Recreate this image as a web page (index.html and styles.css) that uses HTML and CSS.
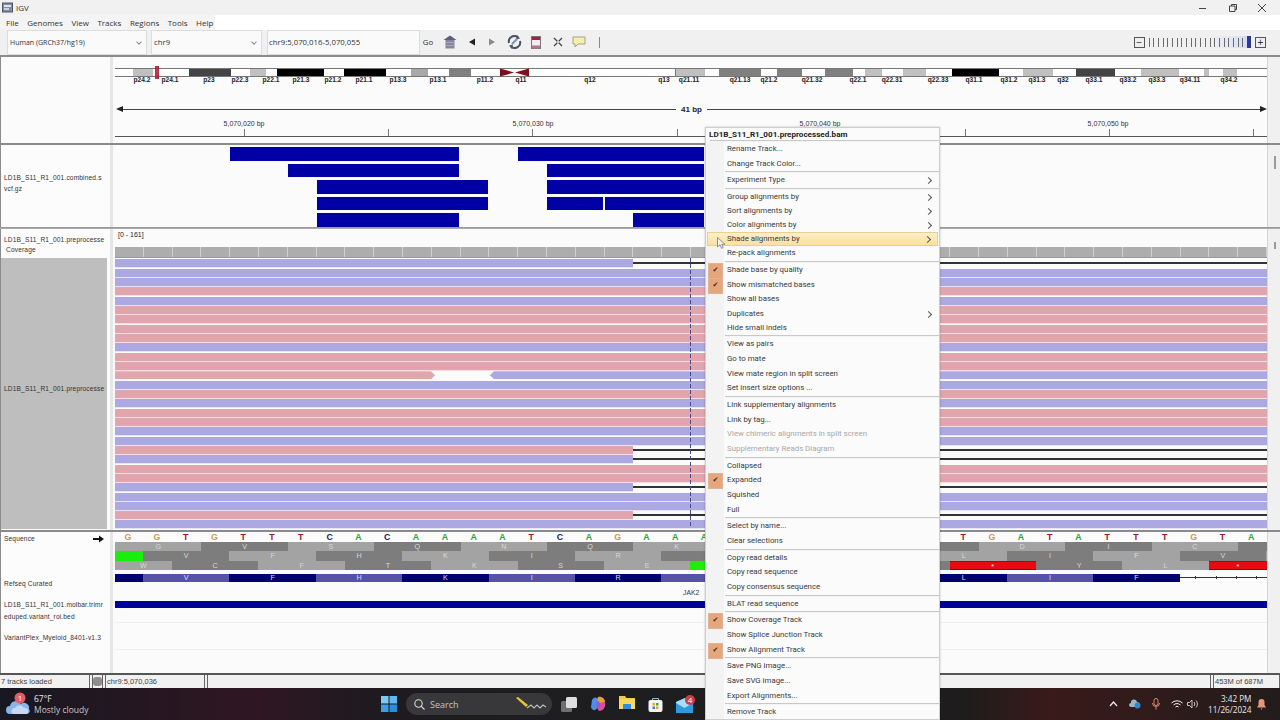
FILE: index.html
```html
<!DOCTYPE html>
<html lang="en">
<head>
<meta charset="utf-8">
<title>IGV</title>
<link rel="stylesheet" href="styles.css">
</head>
<body>
<div class="app">
  <div class="titlebar">
    <svg class="appicon" width="11" height="11" viewBox="0 0 11 11"><rect x="0.5" y="1" width="10" height="9" fill="#7d8fa3" stroke="#556"/><rect x="2" y="3" width="7" height="2" fill="#dfe6ee"/><rect x="2" y="6" width="5" height="2" fill="#c8d2dc"/></svg>
    <span class="apptitle">IGV</span>
    <span class="winctl">
      <svg width="10" height="10" viewBox="0 0 10 10"><path d="M1 5.5H8" stroke="#444" fill="none"/></svg>
      <svg width="10" height="10" viewBox="0 0 10 10"><path d="M1.5 3H7V8.5H1.5ZM3.5 3V1.5H8.5V6.5H7" stroke="#444" fill="none"/></svg>
      <svg width="10" height="10" viewBox="0 0 10 10"><path d="M1 1L9 9M9 1L1 9" stroke="#444" fill="none"/></svg>
    </span>
  </div>
  <div class="menubar">
    <div class="menus"><span>File</span><span>Genomes</span><span>View</span><span>Tracks</span><span>Regions</span><span>Tools</span><span>Help</span></div>
  </div>
  <div class="toolbar">
    <div class="combo c1"><span>Human (GRCh37/hg19)</span><i class="chev"></i></div>
    <div class="combo c2"><span>chr9</span><i class="chev"></i></div>
    <div class="combo c3"><span>chr9:5,070,016-5,070,055</span></div>
    <span class="go">Go</span>
    <div class="tools">
      <svg width="14" height="14" viewBox="0 0 14 14"><path d="M7 0.5L13.5 5H0.5Z" fill="#5e5c80"/><rect x="2.5" y="5" width="9" height="8.5" fill="#85859b"/><rect x="2.5" y="7" width="9" height="1" fill="#a8a8bc"/><rect x="2.5" y="10" width="9" height="1" fill="#a8a8bc"/></svg>
      <svg width="8" height="8" viewBox="0 0 8 8"><path d="M7 0.5V7.5L1 4Z" fill="#222"/></svg>
      <svg class="nx" width="8" height="8" viewBox="0 0 8 8"><path d="M1 0.5V7.5L7 4Z" fill="#8a8a8a"/></svg>
      <svg width="15" height="14" viewBox="0 0 15 14"><path d="M2 8A5.5 5.5 0 0 1 11 2.5M13 6A5.5 5.5 0 0 1 4 11.5" fill="none" stroke="#4a5568" stroke-width="2"/><path d="M10 0L13 3.5L9 4.5ZM5 14L2 10.5L6 9.5Z" fill="#4a5568"/><path d="M5 9L10 4" stroke="#7d93ab" stroke-width="2"/></svg>
      <svg class="rg" width="10" height="13" viewBox="0 0 10 13"><rect x="0.5" y="0.5" width="9" height="12" fill="#f3e9ee" stroke="#777"/><rect x="1" y="1" width="8" height="3" fill="#9b2547"/><rect x="1" y="9.500" width="8" height="3" fill="#b0778c"/></svg>
      <svg class="xx" width="10" height="10" viewBox="0 0 10 10"><path d="M1 1L9 9M9 1L1 9" stroke="#444" stroke-width="1.300" fill="none"/><path d="M4 5H6M5 4V6" stroke="#fff"/></svg>
      <svg class="bb" width="14" height="12" viewBox="0 0 14 12"><path d="M1 1H13V8H6L3 11V8H1Z" fill="#f4efaf" stroke="#a5a283"/></svg>
      <i class="toolbar-bar"></i>
    </div>
    <div class="zoomctl">
      <span class="zbtn">−</span>
      <div class="zticks"><i></i><i></i><i></i><i></i><i></i><i></i><i></i><i></i><i></i><i></i><i></i><i></i><i></i><i></i><i></i><i></i><i></i><i></i><i></i><i></i><i></i><b></b></div>
      <span class="zbtn">+</span>
    </div>
  </div>

  <div class="hpanel">
    <div class="names"></div>
    <div class="gutter"></div>
    <div class="htrack">
      <div class="ideo">
        <i class="w" style="width:17.500px"></i><i class="g3" style="width:20.400px"></i><i class="w" style="width:36px"></i><i class="g1" style="width:42px"></i><i class="w" style="width:19px"></i><i class="g3" style="width:16.500px"></i><i class="w" style="width:11px"></i><i class="g0" style="width:47px"></i><i class="w" style="width:19.200px"></i><i class="g0" style="width:42.800px"></i><i class="w" style="width:24.900px"></i><i class="g2b" style="width:17.200px"></i><i class="w" style="width:20.800px"></i><i class="g2" style="width:21.600px"></i><i class="w" style="width:29.400px"></i>
        <svg class="cen" width="29" height="8" viewBox="0 0 29 8"><path d="M0 0L14 4L0 8ZM29 0L15 4L29 8Z" fill="#7d0f1e"/></svg>
        <i class="w" style="width:123px"></i><i class="w tickband" style="width:23.500px"></i><i class="g3" style="width:29px"></i><i class="w" style="width:14.300px"></i><i class="g2" style="width:42.200px"></i><i class="w" style="width:15.700px"></i><i class="g2" style="width:24.900px"></i><i class="w" style="width:22.900px"></i><i class="g2" style="width:28.500px"></i><i class="w" style="width:11.500px"></i><i class="g3" style="width:17.100px"></i><i class="w" style="width:21.400px"></i><i class="g3" style="width:22.700px"></i><i class="w" style="width:26.100px"></i><i class="g0" style="width:47px"></i><i class="w" style="width:24.100px"></i><i class="g3" style="width:30.100px"></i><i class="w" style="width:22.500px"></i><i class="g1" style="width:39.500px"></i><i class="w" style="width:26.200px"></i><i class="g3" style="width:37.600px"></i><i class="w" style="width:25.200px"></i><i class="g3" style="width:5px"></i><i class="w" style="width:14px"></i><i class="g3" style="width:13.700px"></i><i class="w fill"></i>
        <i class="marker"></i>
      </div>
      <div class="ideolabels">
        <span style="left:27px">p24.2</span><span style="left:55px">p24.1</span><span style="left:94px">p23</span><span style="left:125px">p22.3</span><span style="left:156px">p22.1</span><span style="left:186px">p21.3</span><span style="left:218px">p21.2</span><span style="left:249px">p21.1</span><span style="left:283px">p13.3</span><span style="left:323px">p13.1</span><span style="left:370px">p11.2</span><span style="left:406px">q11</span><span style="left:475px">q12</span><span style="left:549px">q13</span><span style="left:574px">q21.11</span><span style="left:625px">q21.13</span><span style="left:654px">q21.2</span><span style="left:697px">q21.32</span><span style="left:743px">q22.1</span><span style="left:777px">q22.31</span><span style="left:823px">q22.33</span><span style="left:859px">q31.1</span><span style="left:894px">q31.2</span><span style="left:922px">q31.3</span><span style="left:948px">q32</span><span style="left:979px">q33.1</span><span style="left:1013px">q33.2</span><span style="left:1042px">q33.3</span><span style="left:1075px">q34.11</span><span style="left:1114px">q34.2</span>
      </div>
      <div class="span">
        <svg class="ah al" width="7" height="6" viewBox="0 0 7 6"><path d="M0 3L7 0V6Z" fill="#222"/></svg>
        <i class="sline"></i><b>41 bp</b><i class="sline"></i>
        <svg class="ah ar" width="7" height="6" viewBox="0 0 7 6"><path d="M7 3L0 0V6Z" fill="#222"/></svg>
      </div>
      <div class="ruler">
        <span class="rl" style="left:129px">5,070,020 bp</span><span class="rl" style="left:418px">5,070,030 bp</span><span class="rl" style="left:705px">5,070,040 bp</span><span class="rl" style="left:993px">5,070,050 bp</span>
        <div class="ticks"><i></i><i></i><i></i><i></i><i></i><i></i><i></i><i></i></div>
      </div>
    </div>
    <div class="scroll"></div>
  </div>

  <div class="panel p1">
    <div class="names">
      <div class="nm n1">LD1B_S11_R1_001.combined.s</div>
      <div class="nm n1b">vcf.gz</div>
    </div>
    <div class="gutter"></div>
    <div class="track vcfreads">
      <div class="vr r1"><i style="margin-left:115px;width:229px"></i><i style="margin-left:59px;width:186px"></i></div>
      <div class="vr"><i style="margin-left:173px;width:171px"></i><i style="margin-left:88px;width:157px"></i></div>
      <div class="vr"><i style="margin-left:202px;width:171px"></i><i style="margin-left:59px;width:157px"></i></div>
      <div class="vr"><i style="margin-left:202px;width:171px"></i><i style="margin-left:59px;width:56px"></i><i style="margin-left:2px;width:99px"></i></div>
      <div class="vr"><i style="margin-left:202px;width:142px"></i><i style="margin-left:174px;width:71px"></i></div>
    </div>
    <div class="scroll"><i class="thumb t1"></i></div>
  </div>

  <div class="panel p2">
    <div class="names">
      <div class="nm n2">LD1B_S11_R1_001.preprocesse</div>
      <div class="nm n2b">Coverage</div>
      <div class="greybox"><div class="nm">LD1B_S11_R1_001.preprocesse</div></div>
    </div>
    <div class="gutter"></div>
    <div class="track">
      <div class="covlabel">[0 - 161]</div>
      <div class="coverage"></div>
      <div class="reads">
        <div class="row"><i class="b cut"></i><i class="pair"></i></div>
        <div class="row"><i class="b"></i></div>
        <div class="row"><i class="b"></i></div>
        <div class="row"><i class="p"></i></div>
        <div class="row"><i class="b"></i></div>
        <div class="row"><i class="p"></i></div>
        <div class="row"><i class="p"></i></div>
        <div class="row"><i class="p"></i></div>
        <div class="row"><i class="p"></i></div>
        <div class="row"><i class="b"></i></div>
        <div class="row"><i class="p"></i></div>
        <div class="row"><i class="p"></i></div>
        <div class="row"><i class="p endr"></i><i class="b endl"></i></div>
        <div class="row"><i class="b"></i></div>
        <div class="row"><i class="p"></i></div>
        <div class="row"><i class="b"></i></div>
        <div class="row"><i class="p"></i></div>
        <div class="row"><i class="p"></i></div>
        <div class="row"><i class="b"></i></div>
        <div class="row"><i class="b"></i></div>
        <div class="row"><i class="p cut"></i><i class="pair"></i></div>
        <div class="row"><i class="b cut"></i><i class="pair"></i></div>
        <div class="row"><i class="p"></i></div>
        <div class="row"><i class="p"></i></div>
        <div class="row"><i class="b cut"></i><i class="pair"></i></div>
        <div class="row"><i class="b"></i></div>
        <div class="row"><i class="b"></i></div>
        <div class="row"><i class="p cut"></i><i class="pair"></i></div>
        <div class="row"><i class="b"></i></div>
        <i class="center"></i>
      </div>
    </div>
    <div class="scroll"><i class="thumb t2"></i></div>
  </div>

  <div class="panel p3">
    <div class="names">
      <div class="seqname"><span class="nm">Sequence</span><svg width="11" height="8" viewBox="0 0 11 8"><path d="M0 3H6V0.500L11 4L6 7.500V5H0Z" fill="#111"/></svg></div>
      <div class="nm n3">Refseq Curated</div>
      <div class="nm n4">LD1B_S11_R1_001.molbar.trimr</div>
      <div class="nm n5">eduped.variant_roi.bed</div>
      <div class="nm n6">VariantPlex_Myeloid_8401-v1.3</div>
    </div>
    <div class="gutter"></div>
    <div class="track">
      <div class="bases">
        <b class="G">G</b><b class="G">G</b><b class="T">T</b><b class="G">G</b><b class="T">T</b><b class="T">T</b><b class="T">T</b><b class="C">C</b><b class="A">A</b><b class="C">C</b>
        <b class="A">A</b><b class="A">A</b><b class="A">A</b><b class="A">A</b><b class="T">T</b><b class="C">C</b><b class="A">A</b><b class="G">G</b><b class="A">A</b><b class="A">A</b>
        <b class="A">A</b><b></b><b></b><b></b><b></b><b></b><b></b><b></b><b></b><b class="T">T</b>
        <b class="G">G</b><b class="A">A</b><b class="T">T</b><b class="A">A</b><b class="T">T</b><b class="T">T</b><b class="T">T</b><b class="G">G</b><b class="T">T</b><b class="A">A</b>
      </div>
      <div class="frame">
        <i class="l">G</i><i class="d">V</i><i class="l">S</i><i class="d">Q</i><i class="l">N</i><i class="d">Q</i><i class="l">K</i><i class="d"></i><i class="l"></i><i class="d"></i><i class="l">D</i><i class="d">I</i><i class="l">C</i><i class="d grow"></i>
      </div>
      <div class="frame">
        <i class="st s1"></i><i class="d">V</i><i class="l">F</i><i class="d">H</i><i class="l">K</i><i class="d">I</i><i class="l">R</i><i class="d"></i><i class="l"></i><i class="d"></i><i class="l">L</i><i class="d">I</i><i class="l">F</i><i class="d">V</i><i class="l grow"></i>
      </div>
      <div class="frame">
        <i class="l s2">W</i><i class="d">C</i><i class="l">F</i><i class="d">T</i><i class="l">K</i><i class="d">S</i><i class="l">E</i><i class="st"></i><i class="l"></i><i class="d"></i><i class="rd">*</i><i class="d">Y</i><i class="l">L</i><i class="rd grow">*</i>
      </div>
      <div class="refseq">
        <i class="n s1"></i><i class="m">V</i><i class="n">F</i><i class="m">H</i><i class="n">K</i><i class="m">I</i><i class="n">R</i><i class="m"></i><i class="n"></i><i class="m"></i><i class="n">L</i><i class="m">I</i><i class="n">F</i>
        <div class="intron"><i></i><i></i><i></i><i></i></div>
      </div>
      <div class="genelabel"><span>JAK2</span></div>
      <div class="bedbar"></div>
      <div class="sub s23"></div>
      <div class="sub s27"></div>
    </div>
    <div class="scroll"></div>
  </div>

  <div class="status">
    <div class="cell st1">7 tracks loaded</div>
    <div class="cell st2"><i></i></div>
    <div class="cell st3">chr9:5,070,036</div>
    <div class="cell st4"></div>
    <div class="cell st5">453M of 687M</div>
  </div>

  <div class="taskbar">
    <div class="weather">
      <svg width="28" height="26" viewBox="0 0 28 26"><path d="M4 23A4 4 0 0 1 4 15A6 6 0 0 1 15 13A5 5 0 0 1 23 18A3 3 0 0 1 21 23Z" fill="#8ab4e8"/><path d="M8 23A3 3 0 0 1 9 17A5 5 0 0 1 18 17A3 3 0 0 1 20 23Z" fill="#c6d8f2"/><circle cx="14" cy="7" r="5.500" fill="#e8596a"/><text x="14" y="10" text-anchor="middle" class="wbadge">1</text></svg>
      <div class="wtext"><span>67°F</span><span class="wsub">Mostly cloudy</span></div>
    </div>
    <div class="center-icons">
      <svg width="16" height="16" viewBox="0 0 16 16"><rect x="0" y="0" width="7.500" height="7.500" fill="#7ccbf5"/><rect x="8.500" y="0" width="7.500" height="7.500" fill="#5fb8f0"/><rect x="0" y="8.500" width="7.500" height="7.500" fill="#3a9fe6"/><rect x="8.500" y="8.500" width="7.500" height="7.500" fill="#2a8ede"/></svg>
      <div class="search">
        <svg width="11" height="11" viewBox="0 0 11 11"><circle cx="4.500" cy="4.500" r="3.700" fill="none" stroke="#ddd" stroke-width="1.100"/><path d="M7.300 7.300L10.500 10.500" stroke="#ddd" stroke-width="1.100"/></svg>
        <span>Search</span>
        <svg class="pen" width="32" height="14" viewBox="0 0 32 14"><path d="M1 1L11 10L13 8L3 0Z" fill="#e5c441"/><path d="M12 11L16 8L19 11L22 8L25 11L28 8L31 10" fill="none" stroke="#bbb" stroke-width="1.200"/></svg>
      </div>
      <svg class="taskview" width="16" height="15" viewBox="0 0 16 15"><rect x="0" y="4" width="11" height="11" rx="1.500" fill="#6f6f72"/><rect x="5" y="0" width="11" height="11" rx="1.500" fill="#dedede"/></svg>
      <svg width="16" height="16" viewBox="0 0 16 16"><path d="M2 4C4 0 8 1 8 5L7 12C6 15 2 15 1 11Z" fill="#4d8fe8"/><path d="M8 1C12 0 15 3 15 6L10 8L7 4Z" fill="#e5a13a"/><path d="M15 6C16 10 14 15 9 15L7 12L9 7Z" fill="#d94f9e"/><path d="M6 7L9 5L10 10L7 12Z" fill="#8a5cd6"/></svg>
      <div class="tbopen"><svg width="16" height="14" viewBox="0 0 16 14"><path d="M0 1H6L7.500 3H16V14H0Z" fill="#f2c84b"/><rect x="0" y="4" width="16" height="10" fill="#f7d661"/><rect x="4" y="9" width="8" height="5" fill="#2e8fd8"/></svg></div>
      <svg width="15" height="15" viewBox="0 0 15 15"><path d="M4.500 3V1.500H10.500V3" fill="none" stroke="#7cc" stroke-width="1"/><rect x="0.500" y="3" width="14" height="12" rx="2" fill="#f4f4f4"/><rect x="4.500" y="6" width="2.500" height="2.500" fill="#e2a52e"/><rect x="8" y="6" width="2.500" height="2.500" fill="#5a9a3a"/><rect x="4.500" y="9.500" width="2.500" height="2.500" fill="#3a7ec4"/><rect x="8" y="9.500" width="2.500" height="2.500" fill="#e2a52e"/></svg>
      <svg width="20" height="18" viewBox="0 0 20 18"><path d="M0 7L9 3L17 7V18H0Z" fill="#2f9bdc"/><path d="M0 8L8.500 13L17 8V7L9 3L0 7Z" fill="#a8defa"/><circle cx="14" cy="5" r="5" fill="#cf3e45"/><text x="14" y="8" text-anchor="middle" class="wbadge">4</text></svg>
    </div>
    <div class="tray">
      <svg width="9" height="6" viewBox="0 0 9 6"><path d="M1 5L4.500 1L8 5" fill="none" stroke="#eee" stroke-width="1.200"/></svg>
      <svg width="12" height="10" viewBox="0 0 12 10"><path d="M2 8A2 2 0 0 1 2 4A3 3 0 0 1 8 3A3 3 0 0 1 10 8Z" fill="#9fb4c6"/><circle cx="8.500" cy="6.500" r="3" fill="#2b88cf"/></svg>
      <svg width="8" height="12" viewBox="0 0 8 12"><rect x="2" y="0.500" width="4" height="7" rx="2" fill="none" stroke="#d88a6a"/><path d="M0.500 5A3.500 3.500 0 0 0 7.500 5M4 9V11.500" fill="none" stroke="#d88a6a"/></svg>
      <svg width="12" height="9" viewBox="0 0 12 9"><path d="M0.500 3A8 8 0 0 1 11.500 3M2.500 5A5 5 0 0 1 9.500 5M4.500 7A2 2 0 0 1 7.500 7" fill="none" stroke="#eee"/></svg>
      <svg class="speaker" width="12" height="10" viewBox="0 0 12 10"><path d="M0.500 3.500H2.500L5 1V9L2.500 6.500H0.500Z" fill="none" stroke="#eee" stroke-width=".8"/><path d="M7 3A3 3 0 0 1 7 7M9 1.500A5 5 0 0 1 9 8.500" fill="none" stroke="#eee" stroke-width=".8"/></svg>
      <div class="clock"><span>3:42 PM</span><span>11/26/2024</span></div>
      <svg class="bell" width="9" height="11" viewBox="0 0 9 11"><path d="M4.500 0A3 3 0 0 1 7.500 3V6L9 8.500H0L1.500 6V3A3 3 0 0 1 4.500 0ZM3.500 9.500H5.500L4.500 11Z" fill="#e8967a"/></svg>
    </div>
  </div>
</div>

<div class="popup">
  <div class="ptitle">LD1B_S11_R1_001.preprocessed.bam</div>
  <div class="sep top"></div>
  <div class="mi">Rename Track...</div>
  <div class="mi">Change Track Color...</div>
  <div class="sep"></div>
  <div class="mi sub-m">Experiment Type</div>
  <div class="sep"></div>
  <div class="mi sub-m tight">Group alignments by</div>
  <div class="mi sub-m tight">Sort alignments by</div>
  <div class="mi sub-m tight">Color alignments by</div>
  <div class="mi sub-m tight hot">Shade alignments by</div>
  <div class="mi">Re-pack alignments</div>
  <div class="sep"></div>
  <div class="mi chk">Shade base by quality</div>
  <div class="mi chk">Show mismatched bases</div>
  <div class="mi tight">Show all bases</div>
  <div class="mi sub-m tight">Duplicates</div>
  <div class="mi">Hide small indels</div>
  <div class="sep"></div>
  <div class="mi">View as pairs</div>
  <div class="mi">Go to mate</div>
  <div class="mi">View mate region in split screen</div>
  <div class="mi">Set insert size options ...</div>
  <div class="sep"></div>
  <div class="mi">Link supplementary alignments</div>
  <div class="mi">Link by tag...</div>
  <div class="mi off">View chimeric alignments in split screen</div>
  <div class="mi off">Supplementary Reads Diagram</div>
  <div class="sep"></div>
  <div class="mi">Collapsed</div>
  <div class="mi chk">Expanded</div>
  <div class="mi">Squished</div>
  <div class="mi">Full</div>
  <div class="sep"></div>
  <div class="mi">Select by name...</div>
  <div class="mi">Clear selections</div>
  <div class="sep"></div>
  <div class="mi">Copy read details</div>
  <div class="mi">Copy read sequence</div>
  <div class="mi">Copy consensus sequence</div>
  <div class="sep"></div>
  <div class="mi">BLAT read sequence</div>
  <div class="sep"></div>
  <div class="mi chk">Show Coverage Track</div>
  <div class="mi">Show Splice Junction Track</div>
  <div class="mi chk">Show Alignment Track</div>
  <div class="sep"></div>
  <div class="mi">Save PNG image...</div>
  <div class="mi">Save SVG image...</div>
  <div class="mi">Export Alignments...</div>
  <div class="sep"></div>
  <div class="mi">Remove Track</div>
  <svg class="cursor" width="9" height="12" viewBox="0 0 9 12"><path d="M0.500 0.500V10L3 7.800L4.600 11.300L6.200 10.600L4.700 7.300H8Z" fill="#f2f2f2" stroke="#777" stroke-width=".8"/></svg>
</div>
</body>
</html>
```
FILE: styles.css
```css
* { box-sizing: border-box; }
html, body { margin: 0; padding: 0; width: 1280px; height: 720px; overflow: hidden; }
body { position: relative; font-family: "Liberation Sans", Arial, sans-serif; background: #f0f0f0; color: #222; }
i { display: block; font-style: normal; }
.app { display: flex; flex-direction: column; width: 1280px; height: 720px; }

/* window chrome */
.titlebar { height: 15px; background: #f1f1f1; display: flex; align-items: center; padding-left: 2px; }
.appicon { margin-right: 3px; }
.apptitle { font: 8px "Open Sans", sans-serif; color: #333; }
.winctl { margin-left: auto; display: flex; gap: 19.500px; padding-right: 13px; }
.menubar { height: 15px; background: #fff; }
.menus { width: 215px; height: 15px; background: #f4f4f4; display: flex; align-items: center; gap: 8.500px; padding-left: 6px; font: 8px "Open Sans", sans-serif; color: #333; }

/* toolbar */
.toolbar { height: 27px; background: #f0f0f0; border-bottom: 2px solid #8c8c8c; display: flex; align-items: center; padding: 0 14px 1px 7px; font: 7.800px "Open Sans", sans-serif; color: #333; }
.combo { height: 25px; background: #fafafa; border: 1px solid #dcdcdc; display: flex; align-items: center; padding-left: 2px; position: relative; }
.c1 { width: 140px; font-size: 7px; }
.c2 { width: 111px; margin-left: 4px; }
.c3 { width: 153px; margin-left: 5px; padding-left: 1px; }
.chev { margin-left: auto; margin-right: 5px; width: 4px; height: 4px; border-right: 1px solid #888; border-bottom: 1px solid #888; transform: rotate(45deg); }
.go { margin-left: 2px; width: 12px; text-align: center; }
.tools { display: flex; align-items: center; margin-left: 9px; gap: 10.700px; }
.tools .nx { margin-left: 1.500px; }
.tools .rg { margin-left: -1px; }
.tools .xx { margin-left: 1px; }
.tools .bb { margin-left: -1.500px; }
.toolbar-bar { width: 1px; height: 11px; background: #888; margin-left: 2px; }
.zoomctl { margin-left: auto; display: flex; align-items: center; gap: 4px; }
.zbtn { width: 11px; height: 11px; border: 1px solid #555; background: #eee; font: 10px/9px "Liberation Sans", sans-serif; text-align: center; color: #333; }
.zticks { display: flex; align-items: center; gap: 3.700px; height: 12px; background: linear-gradient(90deg, #f0f0f0 58%, #dfe5f5 85%, #cfd8f2); }
.zticks i { width: 1px; height: 9px; background: #6c6c6c; }
.zticks b { width: 4px; height: 12px; background: #2c3b8f; }

/* panels */
.hpanel, .panel { display: flex; }
.names { width: 110px; flex: none; background: #fcfcfc; border-left: 1px solid #8c8c8c; position: relative; }
.gutter { width: 5px; flex: none; background: #e6e6e6; border-right: 2px solid #fafafa; }
.track, .htrack { width: 1152px; flex: none; background: #fbfbfb; position: relative; }
.scroll { flex: 1; background: #f0f0f0; border-left: 1px solid #d5d5d5; position: relative; }
.thumb { position: absolute; left: 6px; width: 2px; background: #9a9a9a; }
.t1 { top: 11px; height: 13px; }
.t2 { top: 13px; height: 7px; }

/* header */
.hpanel { height: 86px; }
.hpanel .names { background: #fbfbfb; }
.htrack { display: flex; flex-direction: column; padding-top: 11px; }
.ideo { height: 9px; flex: none; display: flex; border-top: 1px solid #777; border-bottom: 1px solid #777; position: relative; }
.ideo .w { background: #fff; }
.ideo .fill { flex: 1; }
.ideo .tickband { border-right: 1px solid #777; }
.g0 { background: #000; }
.g1 { background: #444; }
.g2 { background: #808080; }
.g2b { background: #a8a8a8; }
.g3 { background: #c0c0c0; }
.cen { flex: none; margin: -1px 0; height: 9px; }
.marker { position: absolute; left: 40px; top: -3px; width: 4px; height: 13px; background: #c8102e; border: 1px solid #a01030; opacity: .85; }
.ideolabels { position: relative; flex: none; height: 10px; margin-top: -1.500px; font: bold 7.800px/8px "Liberation Sans", sans-serif; color: #222; }
.ideolabels span { position: absolute; top: 0; transform: translateX(-50%) scaleX(.85); }
.span { display: flex; flex: none; align-items: center; gap: 5px; margin-top: 18.500px; height: 10px; font-size: 8px; color: #222; }
.sline { flex: 1; height: 1px; background: #444; }
.ah { flex: none; }
.al { margin: 0 -5px 0 1px; }
.ar { margin: 0 0 0 -5px; }
.ruler { position: relative; flex: none; height: 18px; margin-top: 5px; padding-top: 1px; border-bottom: 1px solid #555; font: 7px/8px "Liberation Sans", sans-serif; color: #333; }
.rl { position: absolute; top: 1px; transform: translateX(-50%); }
.ticks { position: absolute; left: 129px; right: 0; bottom: 0; display: flex; gap: 143.200px; }
.ticks i { width: 1px; height: 7px; background: #777; }

/* panel 1 */
.p1 { height: 85px; border-top: 2px solid #8a8a8a; border-bottom: 1px solid #9a9a9a; }
.nm { font: 6.600px/9px "Liberation Sans", sans-serif; letter-spacing: .15px; color: #333; white-space: nowrap; }
.n1 { margin: 28px 0 0 3px; }
.n1b { margin: 2px 0 0 3px; }
.vcfreads { padding-top: 2px; display: flex; flex-direction: column; gap: 2.700px; }
.vr { display: flex; height: 14px; }
.vr i { background: #0000a5; }

/* panel 2 */
.p2 { height: 302px; border-top: 1px solid #aaa; }
.n2 { margin: 6px 0 0 3px; }
.n2b { margin: 1px 0 0 5px; }
.greybox { margin-top: 4px; width: 106px; height: 271px; background: #bebebe; display: flex; align-items: center; padding: 0 0 10px 3px; }
.covlabel { height: 18px; font: 7px/12px "Liberation Sans", sans-serif; padding-left: 3px; color: #222; }
.coverage { height: 11px; background: repeating-linear-gradient(90deg, #adadad 0 27.800px, #cfcfcf 27.800px 28.800px); border-bottom: 1px solid #999; }
.reads { position: relative; padding-top: 1.300px; display: flex; flex-direction: column; gap: 1.330px; }
.row { display: flex; height: 8px; }
.row .b, .row .p { flex: 1; }
.b { background: #aca8e2; box-shadow: 0 1px 0 #e6e4f7; }
.p { background: #e0a5ad; box-shadow: 0 1px 0 #f9dde0; }
.row .cut { flex: 0 0 518px; }
.pair { flex: 1; height: 2px; background: #333; margin-top: 3px; }
.row .endr { flex: 0 0 320px; clip-path: polygon(0 0, 316px 0, 100% 50%, 316px 100%, 0 100%); }
.row .endl { margin-left: 55px; clip-path: polygon(4px 0, 100% 0, 100% 100%, 4px 100%, 0 50%); }
.center { position: absolute; left: 575px; top: 0; bottom: 1px; width: 1px; background: repeating-linear-gradient(180deg, #4a4a8e 0 4px, transparent 4px 6px); }

/* panel 3 */
.p3 { height: 143px; border-top: 2px solid #8a8a8a; }
.seqname { display: flex; align-items: center; justify-content: space-between; padding: 2px 6px 0 3px; }
.n3 { margin: 36px 0 0 3px; }
.n4 { margin: 12px 0 0 3px; }
.n5 { margin: 3px 0 0 3px; }
.n6 { margin: 12px 0 0 3px; }
.bases { height: 10px; margin: 0 1.400px 0 -1.400px; display: grid; grid-template-columns: repeat(40, 1fr); font: bold 8.800px/11px "Liberation Sans", sans-serif; text-align: center; }
.A { color: #2f9e3a; } .C { color: #22225f; } .G { color: #c99a55; } .T { color: #9a1a22; }
.frame { height: 9.330px; display: flex; font: 7.200px/9.330px "Liberation Sans", sans-serif; text-align: center; color: #d8d8d8; }
.frame i { flex: 0 0 86.400px; }
.frame .grow { flex: 1; }
.frame .s1, .refseq .s1 { flex: 0 0 28px; }
.frame .s2 { flex: 0 0 57px; }
.frame .l { background: #a3a3a3; }
.frame .d { background: #7d7d7d; }
.frame .st { background: #1aee0e; }
.frame .rd { background: #e40b12; border-top: 1px solid #b00; border-bottom: 1px solid #900; color: #fff; line-height: 9px; }
.refseq { display: flex; height: 8px; margin-top: 4px; font: 7.200px/8px "Liberation Sans", sans-serif; text-align: center; color: #dcdcf0; }
.refseq > i { flex: 0 0 86.400px; }
.n { background: #000070; }
.m { background: #5552a8; }
.intron { flex: 1; height: 1px; margin-top: 3.500px; background: #333; display: flex; justify-content: space-around; padding-left: 6px; }
.intron i { width: 1px; height: 3px; margin-top: -1px; background: #333; }
.genelabel { height: 19px; padding: 6px 0 0 568px; font: 6.800px/9px "Liberation Sans", sans-serif; color: #333; }
.bedbar { height: 7px; background: #00009b; }
.sub { border-bottom: 1px solid #efefef; }
.s23 { height: 15px; }
.s27 { height: 27px; }

/* status */
.status { height: 15px; background: #f1f1f1; border-top: 2px solid #555; display: flex; gap: 2px; font: 7.500px/13px "Liberation Sans", sans-serif; color: #444; }
.cell { border-right: 1px solid #666; border-left: 1px solid #666; padding-left: 1px; white-space: nowrap; overflow: hidden; }
.st1 { width: 90px; border-left: none; }
.st2 { width: 11px; padding: 1px 0 0 0; }
.st2 i { width: 9px; height: 9px; margin-top: 1px; background: #8e8e8e; border-radius: 3px; }
.st3 { width: 100px; }
.st4 { width: 1004px; }
.st5 { flex: 1; }

/* taskbar */
.taskbar { flex: 1; display: flex; align-items: center; position: relative; color: #e8e8e8; font: 8.500px "Open Sans", sans-serif; background: linear-gradient(90deg, #181820, #2f1622 20%, #1d1b1f 30%, #1e1e20 55%, #1e1c1c 75%, #3a1a1a 82%, #231c1c); }
.weather { display: flex; align-items: center; padding-left: 6px; width: 381px; flex: none; }
.wtext { display: flex; flex-direction: column; line-height: 11px; }
.wsub { color: #c8c8c8; }
.wbadge { font: 8px "Open Sans", sans-serif; fill: #fff; }
.center-icons { display: flex; align-items: center; gap: 13px; }
.search { width: 146px; height: 22px; margin-left: -4px; padding: 0 5px 0 8px; border-radius: 11px; background: #38383a; display: flex; align-items: center; gap: 5px; color: #c4c4c4; font-size: 9px; }
.search .pen { margin-left: auto; }
.taskview { margin-left: -4px; }
.tbopen { padding-bottom: 2px; }
.tray { margin-left: auto; display: flex; align-items: center; gap: 11px; padding-right: 14.500px; }
.speaker { margin-left: -7px; }
.clock { display: flex; flex-direction: column; align-items: flex-end; font-size: 8.200px; line-height: 11px; margin-left: -2px; }
.bell { margin-left: -6px; }

/* popup menu */
.popup { position: absolute; left: 705px; top: 127px; width: 235px; height: 593px; background: #fbfbfb; border: 1px solid #cfcfcf; box-shadow: 0 0 2px rgba(0,0,0,.25); font: 7.850px/14.500px Roboto, sans-serif; color: #3a3a3a; }
.popup::before { content: ""; position: absolute; left: 0; top: 14px; bottom: 0; width: 18px; background: #f3f3f3; }
.ptitle { height: 12px; line-height: 12px; padding-left: 3px; font-size: 8.100px; font-weight: 700; color: #222; position: relative; }
.sep { height: 2px; margin: 0 0 0 19px; border-top: 1px solid #c8c8c8; border-bottom: 1px solid #f4f4f4; position: relative; }
.sep.top { margin-left: 4px; }
.mi { height: 14.680px; padding-left: 21px; position: relative; white-space: nowrap; }
.mi.tight { height: 14.100px; }
.sub-m::after { content: ""; position: absolute; right: 8px; top: 5px; width: 4px; height: 4px; border-top: 1px solid #555; border-right: 1px solid #555; transform: rotate(45deg); }
.off { color: #a8a8a8; }
.hot { background: linear-gradient(180deg, #fdf0cc, #fbdf9c); box-shadow: inset 0 0 0 1px #ead08e; margin: 0 1px; padding-left: 20px; }
.chk::before { content: "✔"; position: absolute; left: 2px; top: 0; width: 13px; height: 14px; background: #e6a67c; border: 1px solid #dfb498; color: #50240e; font: 7px/12px "DejaVu Sans", sans-serif; text-align: center; }
.cursor { position: absolute; left: 11px; top: 109px; }
```
